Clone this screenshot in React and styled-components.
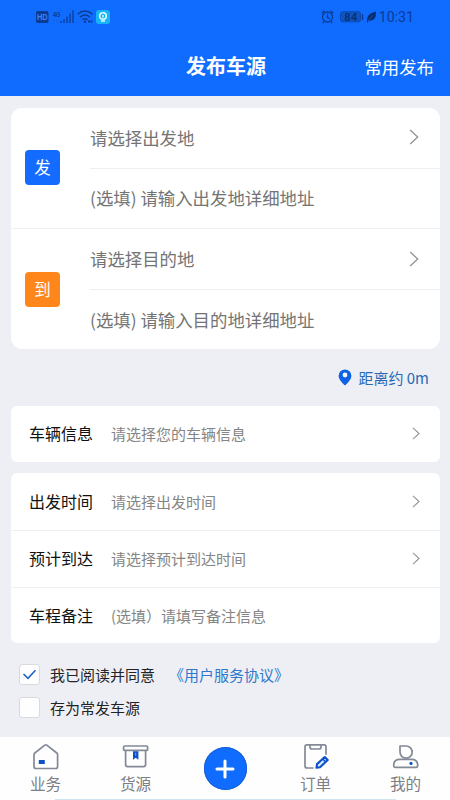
import React from 'react'
import styled, { createGlobalStyle } from 'styled-components'

const GlobalStyle = createGlobalStyle`
  * {
    box-sizing: border-box;
  }
  body {
    margin: 0;
    background: #eeeff5;
    font-family: 'Noto Sans CJK SC', 'Noto Sans', sans-serif;
  }
`

const Page = styled.div`
  display: flex;
  flex-direction: column;
  width: 450px;
  height: 800px;
  overflow: hidden;
  background: #eeeff5;
  white-space: nowrap;
`

const Header = styled.header`
  height: 96px;
  background: #106cff;
  color: #fff;
`

const StatusBar = styled.div`
  display: flex;
  justify-content: space-between;
  height: 34px;
  padding: 0 36px 0 35px;
  color: #0b3b94;
`

const StatusIcons = styled.svg`
  display: block;
  width: ${({ $width }) => $width}px;
  height: 34px;
  font-family: 'Liberation Sans', sans-serif;
  font-weight: 700;
`

const StatusGroup = styled.div`
  display: flex;
  gap: 1px;
`

const Clock = styled.span`
  padding-top: 1px;
  font: 14.2px/32px Roboto, sans-serif;
`

const TitleBar = styled.div`
  display: grid;
  grid-template-columns: 1fr auto 1fr;
  align-items: center;
  height: 62px;
  padding: 0 16px 0 18px;
`

const Title = styled.h1`
  grid-column: 2;
  margin: 0;
  padding-top: 2px;
  font-size: 20px;
  font-weight: 700;
  line-height: 60px;
`

const TitleAction = styled.a`
  justify-self: end;
  padding-top: 2px;
  font-size: 17.4px;
`

const Content = styled.main`
  flex: 1;
  padding: 11.5px 10px 0 11px;
`

const Card = styled.section`
  border-radius: ${({ $radius }) => $radius || 6}px;
  background: #fefffe;
`

const Place = styled.div`
  display: flex;
  align-items: center;
  height: 120.8px;
  padding-left: 14px;

  & + & {
    border-top: 1px solid #eeefef;
  }
`

const Badge = styled.div`
  width: 35px;
  height: 35px;
  border-radius: 4px;
  background: ${({ $color }) => $color};
  color: #fff;
  font-size: 16.5px;
  line-height: 34px;
  text-align: center;
`

const PlaceFields = styled.div`
  flex: 1;
  margin-left: 30px;
`

const PlaceField = styled.div`
  display: flex;
  align-items: center;
  justify-content: space-between;
  height: 60px;
  padding: 0 21px 1px 0;
  color: #747474;
  font-size: 17.4px;

  & + & {
    border-top: 1px solid #eeefef;
  }
`

const Distance = styled.div`
  display: flex;
  align-items: center;
  justify-content: flex-end;
  gap: 6px;
  height: 56.5px;
  padding: 1px 11px 0 0;
  color: #2a6ab5;
  font-size: 15px;
`

const FormCard = styled(Card)`
  margin-bottom: 11px;
`

const FormRow = styled.div`
  display: flex;
  align-items: center;
  height: 56.7px;
  padding: 0 20px 1px 18px;

  & + & {
    border-top: 1px solid #eeefef;
  }
`

const FormLabel = styled.span`
  width: 82px;
  color: #111;
  font-size: 16px;
`

const FormHint = styled.span`
  flex: 1;
  color: #858585;
  font-size: 15px;
`

const Options = styled.div`
  display: flex;
  flex-direction: column;
  gap: 12px;
  padding: 10px 0 0 8px;
`

const Option = styled.label`
  display: flex;
  align-items: center;
  height: 21px;
  color: #222326;
  font-size: 15px;
`

const Check = styled.span`
  display: flex;
  align-items: center;
  justify-content: center;
  width: 21px;
  height: 21px;
  margin-right: 10px;
  border: 1px solid #d9dade;
  border-radius: 3px;
  background: #fefefe;
`

const Agreement = styled.a`
  margin-left: 14px;
  color: #2f79cc;
`

const Nav = styled.nav`
  display: grid;
  grid-template-columns: repeat(5, 1fr);
  height: 63px;
  background: linear-gradient(#cfe6f2, #cfe6f2) 55px 100% / 341px 1px no-repeat, #fefefe;
`

const NavItem = styled.a`
  display: flex;
  flex-direction: column;
  align-items: center;
  padding: 5px 0 0 1px;
  color: #7c7f86;
  font-size: 15.6px;
  line-height: 23px;

  svg {
    display: block;
    margin-bottom: 2px;
  }
`

const AddButton = styled.a`
  display: flex;
  align-items: center;
  justify-content: center;
  width: 43px;
  height: 43px;
  margin: 10px auto 0;
  border-radius: 50%;
  background: #106cff;
  box-shadow: inset 0 0 0 1px #1760d6;
`

const Chevron = ({ size = 16 }) => (
  <svg width={size * 0.625} height={size} viewBox="0 0 10 16" fill="none" stroke="#929292" strokeWidth="1.3">
    <path d="M1.2 1L8.7 8L1.2 15" />
  </svg>
)

const Signals = () => (
  <StatusIcons $width={80} viewBox="0 0 80 34">
    <rect x="1" y="11" width="12.5" height="12" rx="2" fill="currentColor" />
    <text x="2" y="20.4" fontSize="8.5" textLength="10.6" lengthAdjust="spacingAndGlyphs" fill="#3f83f2">HD</text>
    <text x="18" y="16.6" fontSize="7" textLength="7.5" lengthAdjust="spacingAndGlyphs" fill="currentColor">4G</text>
    <path d="M19 19v3M22 19v3" stroke="#1960db" strokeWidth="1" />
    <path d="M26 21v2M29 19v4M32 16.5v6.5M35 13.5v9.5M38 10.5v12.5" stroke="currentColor" strokeWidth="1.3" />
    <g fill="none" stroke="currentColor" strokeWidth="1.4">
      <path d="M42.5 14.2Q50 7.8 57.5 14.2M45 17.2Q50 12.8 55 17.2M47.4 19.8Q50 17.6 52.6 19.8" />
      <path d="M53 21.5h4.5" strokeWidth="2" strokeDasharray="2 .6" />
    </g>
    <circle cx="50" cy="21.8" r="1.2" fill="currentColor" />
    <rect x="61" y="10" width="14" height="14" rx="3" fill="#19b4f5" />
    <circle cx="68" cy="16" r="3.3" fill="none" stroke="#dff8ff" strokeWidth="1.6" />
    <path d="M68 15v2.5M66 21h4" stroke="#dff8ff" strokeWidth="1.5" />
  </StatusIcons>
)

const Battery = () => (
  <StatusIcons $width={58} viewBox="0 0 58 34">
    <g fill="none" stroke="currentColor" strokeWidth="1.3">
      <circle cx="7.5" cy="17" r="5" />
      <path d="M7.5 13.8v3.5l2.4 1.6M1.8 13.2l2.6-2.5M13.2 13.2l-2.6-2.5M4 21.5l-1.3 1.5M11 21.5l1.3 1.5" />
    </g>
    <rect x="20.5" y="11.8" width="20" height="10" rx="2" fill="#0e54c5" stroke="#0b49b2" />
    <path d="M42.5 14v6" stroke="currentColor" strokeWidth="1.4" />
    <text x="24.5" y="20.6" fontSize="10.5" textLength="12.5" fill="#09306f">84</text>
    <path d="M47 22.5Q45.5 13.5 56 11.5Q56.5 21.5 49 20.6L47.6 22.5Z" fill="#092e6c" />
    <path d="M48 21L53 15.3" stroke="#106cff" strokeWidth=".6" />
  </StatusIcons>
)

const Pin = () => (
  <svg width="14" height="17" viewBox="0 0 14 17">
    <path d="M7 .5A6.4 6.4 0 0 0 .6 6.8C.6 10.8 5 14.7 6.3 16Q7 16.6 7.7 16C9 14.7 13.4 10.8 13.4 6.8A6.4 6.4 0 0 0 7 .5Z" fill="#0d62e6" />
    <circle cx="7" cy="6" r="2.4" fill="#f3f7fc" />
  </svg>
)

const HomeIcon = () => (
  <svg width="30" height="28" viewBox="0 0 30 28" fill="none" stroke="#838997" strokeWidth="1.7" strokeLinejoin="round">
    <path d="M3 12.8Q3 11.600 3.800 11L13.800 3.200Q14.800 2.400 15.800 3.200L25.800 11Q26.600 11.600 26.600 12.800V24.500Q26.600 26.500 24.600 26.500H5Q3 26.500 3 24.500Z" />
    <path d="M7.800 18h6v4h-6z" fill="#0d51c9" stroke="none" />
  </svg>
)

const GoodsIcon = () => (
  <svg width="30" height="28" viewBox="0 0 30 28" fill="none" stroke="#838997" strokeWidth="1.7" strokeLinejoin="round">
    <rect x="2.6" y="4" width="24" height="4.4" rx="1" />
    <path d="M4.6 8.400v14.200q0 2 2 2h16q2 0 2-2V8.400" />
    <path d="M12 9.200h5.400v8.500l-2.700-2l-2.700 2z" fill="#0d51c9" stroke="none" />
    <path d="M14.700 10.700v3" stroke="#77a3eb" strokeWidth="1" />
  </svg>
)

const OrderIcon = () => (
  <svg width="30" height="28" viewBox="0 0 30 28" fill="none" stroke="#838997" strokeWidth="1.7" strokeLinejoin="round">
    <path d="M12.600 26H6q-2 0-2-2V4.800q0-2 2-2h17q2 0 2 2v8" />
    <path d="M9 2.800v2.200q0 2 2 2h7q2 0 2-2V2.800" />
    <path d="M15.500 25.800l.5-3.700L23.800 15l2.900 3l-7.700 7.300z" fill="#d7e6ff" stroke="#0d51c9" strokeWidth="2.1" />
    <path d="M21.600 16.800l3 3.100" stroke="#0d51c9" strokeWidth="1.5" />
  </svg>
)

const UserIcon = () => (
  <svg width="30" height="28" viewBox="0 0 30 28" fill="none" stroke="#838997" strokeWidth="1.7" strokeLinejoin="round">
    <path d="M9 4H15.200A6.100 6.100 0 1 1 9 10.100Z" />
    <path d="M4.400 25.300q-1.700 0-1.700-1.800q0-6.200 6-6.200h12q6 0 6 6.200q0 1.800-1.700 1.800z" />
    <circle cx="20" cy="21.400" r="1.600" fill="#0d51c9" stroke="none" />
  </svg>
)

const places = [
  { badge: '发', color: '#146bff', name: '请选择出发地', detail: '(选填) 请输入出发地详细地址' },
  { badge: '到', color: '#ff861b', name: '请选择目的地', detail: '(选填) 请输入目的地详细地址' },
]

const App = () => {
  return (
    <>
      <GlobalStyle />
      <Page>
        <Header>
          <StatusBar>
            <Signals />
            <StatusGroup>
              <Battery />
              <Clock>10:31</Clock>
            </StatusGroup>
          </StatusBar>
          <TitleBar>
            <Title>发布车源</Title>
            <TitleAction>常用发布</TitleAction>
          </TitleBar>
        </Header>

        <Content>
          <Card $radius={11}>
            {places.map((place) => (
              <Place key={place.badge}>
                <Badge $color={place.color}>{place.badge}</Badge>
                <PlaceFields>
                  <PlaceField>
                    {place.name}
                    <Chevron />
                  </PlaceField>
                  <PlaceField>{place.detail}</PlaceField>
                </PlaceFields>
              </Place>
            ))}
          </Card>

          <Distance>
            <Pin />
            <span>距离约 0m</span>
          </Distance>

          <FormCard>
            <FormRow>
              <FormLabel>车辆信息</FormLabel>
              <FormHint>请选择您的车辆信息</FormHint>
              <Chevron size={13} />
            </FormRow>
          </FormCard>

          <FormCard>
            <FormRow>
              <FormLabel>出发时间</FormLabel>
              <FormHint>请选择出发时间</FormHint>
              <Chevron size={13} />
            </FormRow>
            <FormRow>
              <FormLabel>预计到达</FormLabel>
              <FormHint>请选择预计到达时间</FormHint>
              <Chevron size={13} />
            </FormRow>
            <FormRow>
              <FormLabel>车程备注</FormLabel>
              <FormHint>(选填）请填写备注信息</FormHint>
            </FormRow>
          </FormCard>

          <Options>
            <Option>
              <Check>
                <svg width="15" height="11" viewBox="0 0 15 11" fill="none" stroke="#1d62cc" strokeWidth="1.6">
                  <path d="M1.5 5L6 9.3L13.5 1.3" />
                </svg>
              </Check>
              我已阅读并同意
              <Agreement>《用户服务协议》</Agreement>
            </Option>
            <Option>
              <Check />
              存为常发车源
            </Option>
          </Options>
        </Content>

        <Nav>
          <NavItem>
            <HomeIcon />
            业务
          </NavItem>
          <NavItem>
            <GoodsIcon />
            货源
          </NavItem>
          <AddButton>
            <svg width="20" height="20" viewBox="0 0 20 20" stroke="#fff" strokeWidth="3" strokeLinecap="round">
              <path d="M10 2v16M2 10h16" />
            </svg>
          </AddButton>
          <NavItem>
            <OrderIcon />
            订单
          </NavItem>
          <NavItem>
            <UserIcon />
            我的
          </NavItem>
        </Nav>
      </Page>
    </>
  )
}

export default App
